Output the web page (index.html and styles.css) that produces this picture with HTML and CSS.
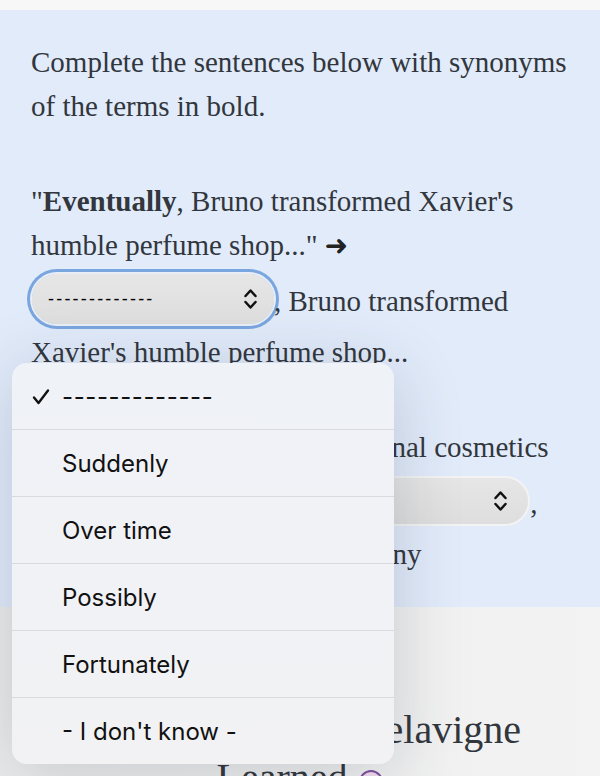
FILE: index.html
```html
<!DOCTYPE html>
<html lang="en">
<head>
<meta charset="utf-8">
<title>Synonyms exercise</title>
<link rel="stylesheet" href="styles.css">
</head>
<body>
<div class="topbar"></div>
<section class="panel">
  <p class="para">Complete the sentences below with synonyms of the terms in bold.</p>
  <p class="para">"<b>Eventually</b>, Bruno transformed Xavier's humble perfume shop..." <span class="arrow">&#10140;</span>
    <span class="select focused"><span class="select-text">-------------</span><svg class="chev" width="15" height="24" viewBox="0 0 15 24"><path d="M2.5 9 L7.5 3.5 L12.5 9 M2.5 15 L7.5 20.5 L12.5 15" fill="none" stroke="#111" stroke-width="2.5" stroke-linecap="round" stroke-linejoin="round"/></svg></span>, Bruno transformed Xavier's humble perfume shop...</p>
  <p class="para">"<b>Later</b>, it became an international cosmetics<br>big company..." <span class="arrow">&#10140;</span>
    <span class="select wide"><span class="select-text">-------------</span><svg class="chev" width="15" height="24" viewBox="0 0 15 24"><path d="M2.5 9 L7.5 3.5 L12.5 9 M2.5 15 L7.5 20.5 L12.5 15" fill="none" stroke="#111" stroke-width="2.5" stroke-linecap="round" stroke-linejoin="round"/></svg></span>,<br>it became a giant global company</p>
</section>
<section class="below">
  <h2 class="title">Perfumer Xavier Delavigne<br>Learned <svg class="info" width="26" height="26" viewBox="0 0 26 26"><circle cx="13" cy="13" r="11" fill="#f3dcef" stroke="#7e4f9c" stroke-width="2"/></svg></h2>
</section>

<div class="menu">
  <div class="opt"><svg class="check" width="18" height="18" viewBox="0 0 18 18"><path d="M2 9.5 L6.5 15 L16 2.5" fill="none" stroke="#111" stroke-width="2.4" stroke-linecap="round" stroke-linejoin="round"/></svg><span class="dashes">-------------</span></div>
  <div class="opt"><span>Suddenly</span></div>
  <div class="opt"><span>Over time</span></div>
  <div class="opt"><span>Possibly</span></div>
  <div class="opt"><span>Fortunately</span></div>
  <div class="opt"><span>- I don't know -</span></div>
</div>
</body>
</html>
```
FILE: styles.css
```css
html, body {
  margin: 0;
  padding: 0;
}
body {
  background: linear-gradient(90deg, #ececec, #f3f3f3);
  width: 600px;
  height: 776px;
  overflow: hidden;
  position: relative;
  font-family: "Liberation Serif", "Times New Roman", serif;
  color: #32363d;
}
.topbar {
  height: 10px;
  background: #f7f7f8;
}
.panel {
  background: #e1ebfa;
  padding: 30px 31px 31px 31px;
}
.para {
  margin: 0 0 51px 0;
  font-size: 29px;
  line-height: 44px;
}
.para:last-child {
  margin-bottom: 0;
}
.para b {
  font-weight: bold;
}
.arrow {
  font-family: "DejaVu Sans", sans-serif;
  font-size: 28px;
  line-height: 1;
  color: #222;
}
.select {
  display: inline-flex;
  align-items: center;
  justify-content: space-between;
  box-sizing: border-box;
  width: 242px;
  height: 50px;
  margin: 7px 0 6px 1px;
  padding: 0 16px 0 16px;
  border-radius: 25px;
  background: linear-gradient(#e6e6e6, #dedede);
  border: 2px solid #f3f3f3;
  vertical-align: 6px;
}
.select.wide {
  width: 278px;
  padding-right: 20px;
}
.select.focused {
  border: none;
  box-shadow: 0 0 0 2px #e9eef6, 0 0 0 5px #7aa6df;
}
.select-text {
  font-family: "Liberation Sans", Arial, sans-serif;
  font-size: 18px;
  color: #000;
  letter-spacing: 2.2px;
}
.chev {
  display: block;
}
.below {
  padding-top: 99px;
}
.title {
  margin: 0;
  text-align: center;
  font-weight: normal;
  font-size: 40px;
  line-height: 48px;
  color: #32363d;
}
.info {
  vertical-align: -4px;
}
.menu {
  position: absolute;
  left: 12px;
  top: 363px;
  width: 382px;
  border-radius: 15px;
  background: linear-gradient(#eff2f7, #f2f2f4);
  box-shadow: 0 10px 70px rgba(40, 50, 70, 0.2);
  overflow: hidden;
  font-family: Inter, "Noto Sans", sans-serif;
}
.opt {
  position: relative;
  height: 66px;
  display: flex;
  align-items: center;
  padding-left: 50px;
  font-size: 24px;
  color: #111;
}
.opt + .opt {
  border-top: 1px solid #d9d9de;
}
.dashes {
  letter-spacing: 0.6px;
}
.check {
  position: absolute;
  left: 20px;
  top: 25px;
}
```
